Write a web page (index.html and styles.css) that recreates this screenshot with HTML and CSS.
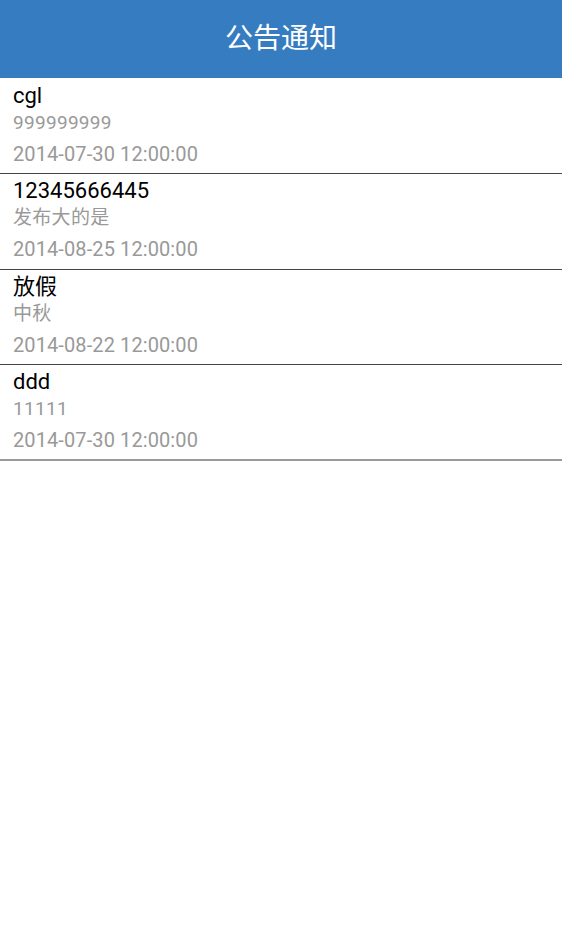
FILE: index.html
```html
<!DOCTYPE html>
<html lang="zh">
<head>
<meta charset="utf-8">
<link rel="stylesheet" href="styles.css">
</head>
<body>
<header class="bar"><h1 class="bar-title">公告通知</h1></header>
<ul class="list">
  <li class="item">
    <div class="title">cgl</div>
    <div class="sub">999999999</div>
    <div class="date">2014-07-30 12:00:00</div>
  </li>
  <li class="item">
    <div class="title">12345666445</div>
    <div class="sub">发布大的是</div>
    <div class="date">2014-08-25 12:00:00</div>
  </li>
  <li class="item">
    <div class="title">放假</div>
    <div class="sub">中秋</div>
    <div class="date">2014-08-22 12:00:00</div>
  </li>
  <li class="item last">
    <div class="title">ddd</div>
    <div class="sub">11111</div>
    <div class="date">2014-07-30 12:00:00</div>
  </li>
</ul>
</body>
</html>
```
FILE: styles.css
```css
html, body {
  margin: 0;
  padding: 0;
  background: #fff;
  font-family: Roboto, "Noto Sans CJK SC", sans-serif;
}
.bar {
  height: 78px;
  background: #367cc0;
  display: flex;
  align-items: center;
  justify-content: center;
}
.bar-title {
  margin: 0;
  color: #fff;
  font-size: 28px;
  font-weight: normal;
  line-height: 1;
}
.list {
  list-style: none;
  margin: 0;
  padding: 1px 0 0;
}
.item {
  padding: 4px 13px 2.33px;
  border-bottom: 1px solid #444;
}
.item.last {
  border-bottom: 2px solid #9a9a9a;
}
.title {
  font-size: 22px;
  line-height: 26px;
  color: #000;
}
.sub {
  font-size: 19px;
  line-height: 28px;
  color: #999;
  letter-spacing: 0.3px;
}
.date {
  font-size: 20px;
  line-height: 34px;
  color: #999;
  letter-spacing: 0.1px;
}
```
